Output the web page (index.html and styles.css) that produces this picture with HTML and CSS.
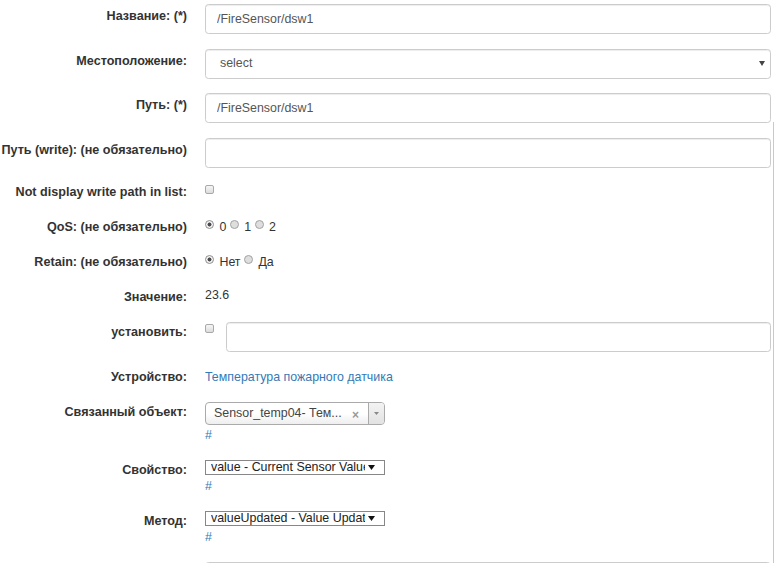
FILE: index.html
```html
<!DOCTYPE html>
<html lang="ru">
<head>
<meta charset="utf-8">
<title>Свойства</title>
<link rel="stylesheet" href="styles.css">
</head>
<body>
<div class="page">
  <form class="form">
    <div class="group input-row">
      <label class="lbl">Название: (*)</label>
      <div class="ctl"><input class="fc" type="text" value="/FireSensor/dsw1"></div>
    </div>
    <div class="group input-row">
      <label class="lbl">Местоположение:</label>
      <div class="ctl">
        <div class="fc fc-select">
          <span>select</span>
          <svg class="caret" width="6" height="5" viewBox="0 0 6 5"><path d="M0 0H6L3 5Z" fill="#444"/></svg>
        </div>
      </div>
    </div>
    <div class="group input-row">
      <label class="lbl">Путь: (*)</label>
      <div class="ctl"><input class="fc" type="text" value="/FireSensor/dsw1"></div>
    </div>
    <div class="group input-row">
      <label class="lbl">Путь (write): (не обязательно)</label>
      <div class="ctl"><input class="fc" type="text" value=""></div>
    </div>
    <div class="group">
      <label class="lbl">Not display write path in list:</label>
      <div class="ctl ctl-flex"><input class="chk chk-top" type="checkbox"></div>
    </div>
    <div class="group">
      <label class="lbl">QoS: (не обязательно)</label>
      <div class="ctl radios">
        <input class="rad" type="radio" name="qos" checked> 0 <input class="rad" type="radio" name="qos"> 1 <input class="rad" type="radio" name="qos"> 2
      </div>
    </div>
    <div class="group">
      <label class="lbl">Retain: (не обязательно)</label>
      <div class="ctl radios">
        <input class="rad" type="radio" name="retain" checked> Нет <input class="rad" type="radio" name="retain"> Да
      </div>
    </div>
    <div class="group">
      <label class="lbl">Значение:</label>
      <div class="ctl value">23.6</div>
    </div>
    <div class="group">
      <label class="lbl lbl-set">установить:</label>
      <div class="ctl ctl-flex set-row">
        <input class="chk chk-set" type="checkbox">
        <input class="fc" type="text" value="">
      </div>
    </div>
    <div class="group">
      <label class="lbl">Устройство:</label>
      <div class="ctl"><a class="link" href="#">Температура пожарного датчика</a></div>
    </div>
    <div class="group">
      <label class="lbl">Связанный объект:</label>
      <div class="ctl">
        <div class="s2">
          <span class="s2-text">Sensor_temp04- Тем...</span>
          <span class="s2-clear">×</span>
          <span class="s2-arrow"><svg width="5" height="3" viewBox="0 0 5 3"><path d="M0 0H5L2.5 3Z" fill="#888"/></svg></span>
        </div>
        <a class="link hash" href="#">#</a>
      </div>
    </div>
    <div class="group">
      <label class="lbl">Свойство:</label>
      <div class="ctl">
        <div class="nsel">
          <span class="nsel-text">value - Current Sensor Value</span>
          <svg class="nsel-arrow" width="7" height="5" viewBox="0 0 7 5"><path d="M0 0H7L3.5 5Z" fill="#111"/></svg>
        </div>
        <a class="link hash hash-sel" href="#">#</a>
      </div>
    </div>
    <div class="group">
      <label class="lbl">Метод:</label>
      <div class="ctl">
        <div class="nsel">
          <span class="nsel-text">valueUpdated - Value Updated</span>
          <svg class="nsel-arrow" width="7" height="5" viewBox="0 0 7 5"><path d="M0 0H7L3.5 5Z" fill="#111"/></svg>
        </div>
        <a class="link hash hash-sel" href="#">#</a>
      </div>
    </div>
    <div class="group input-row">
      <label class="lbl"></label>
      <div class="ctl"><input class="fc" type="text" value=""></div>
    </div>
  </form>
</div>
</body>
</html>
```

FILE: styles.css
```css
* { box-sizing: border-box; }

html, body {
  margin: 0;
  padding: 0;
  background: #fff;
  overflow: hidden;
}

body {
  font-family: "Liberation Sans", Arial, Helvetica, sans-serif;
  font-size: 12.6px;
  color: #333;
}

.page {
  position: relative;
  height: 563px;
  padding-top: 4px;
}

.page::after {
  content: "";
  position: absolute;
  left: 773px;
  top: 122px;
  bottom: 0;
  width: 1px;
  background: #c9c9c9;
}

.form { margin: 0; }

.group {
  display: grid;
  grid-template-columns: 187px 566px;
  column-gap: 18px;
  margin-bottom: 14.5px;
  line-height: 20.5px;
}

.lbl {
  text-align: right;
  font-weight: bold;
  white-space: nowrap;
  color: #333;
}

.input-row .lbl { padding-top: 2px; }

.fc {
  display: block;
  width: 100%;
  height: 30px;
  margin: 0;
  padding: 0 11px;
  border: 1px solid #ccc;
  border-radius: 3.5px;
  box-shadow: inset 0 1px 1px rgba(0, 0, 0, 0.075);
  background: #fff;
  font-family: inherit;
  font-size: 12.4px;
  color: #555;
  outline: none;
}

.fc-select {
  display: flex;
  align-items: center;
  justify-content: space-between;
  padding: 0 5px 0 14px;
}

.ctl-flex {
  display: flex;
  align-items: flex-start;
}

.chk {
  appearance: none;
  -webkit-appearance: none;
  flex: none;
  width: 9px;
  height: 9px;
  margin: 0;
  border: 1px solid #a9a9a9;
  border-radius: 2px;
  background: linear-gradient(#f6f6f6, #dcdcdc);
}

.chk-top { margin-top: 3px; }

.set-row { gap: 12px; }
.chk-set { margin-top: 2px; }

.radios {
  font-size: 12.4px;
  color: #333;
}

.rad {
  appearance: none;
  -webkit-appearance: none;
  display: inline-block;
  vertical-align: top;
  width: 9px;
  height: 9px;
  margin: 3px 2px 0 0;
  border: 1px solid #a3a3a3;
  border-radius: 50%;
  background: #dedede;
}

.rad:checked {
  background: radial-gradient(circle, #4a4a4a 0 1.7px, #f4f4f4 2.3px);
  border-color: #8e8e8e;
}

.value {
  font-size: 12.4px;
  line-height: 16.5px;
}

.link {
  color: #337ab7;
  text-decoration: none;
  font-size: 12.4px;
}

.hash { display: block; }
.hash-sel { padding-top: 1px; }

.s2 {
  display: flex;
  align-items: center;
  width: 180px;
  height: 23px;
  border: 1px solid #aaa;
  border-radius: 4px;
  background: linear-gradient(#fff 50%, #eee);
  padding-left: 8px;
  overflow: hidden;
  font-size: 12.4px;
  color: #444;
}

.s2-text {
  flex: 1;
  white-space: nowrap;
  overflow: hidden;
}

.s2-clear {
  color: #999;
  font-weight: bold;
  font-size: 12px;
  line-height: 12px;
  margin: 4px 9px 0 0;
}

.s2-arrow {
  flex: none;
  width: 16px;
  height: 100%;
  border-left: 1px solid #aaa;
  background: linear-gradient(#f3f3f3, #e2e2e2);
  display: flex;
  align-items: center;
  justify-content: center;
}

.nsel {
  display: flex;
  align-items: center;
  width: 180px;
  height: 15px;
  border: 1px solid #878787;
  background: #fff;
  padding: 0 10px 0 5px;
  font-size: 12.4px;
  line-height: 13px;
  color: #222;
}

.nsel-text {
  width: 154px;
  flex: none;
  white-space: nowrap;
  overflow: hidden;
}

.nsel-text::after { content: ""; }

.nsel-arrow {
  flex: none;
  margin-left: 3px;
}
```
